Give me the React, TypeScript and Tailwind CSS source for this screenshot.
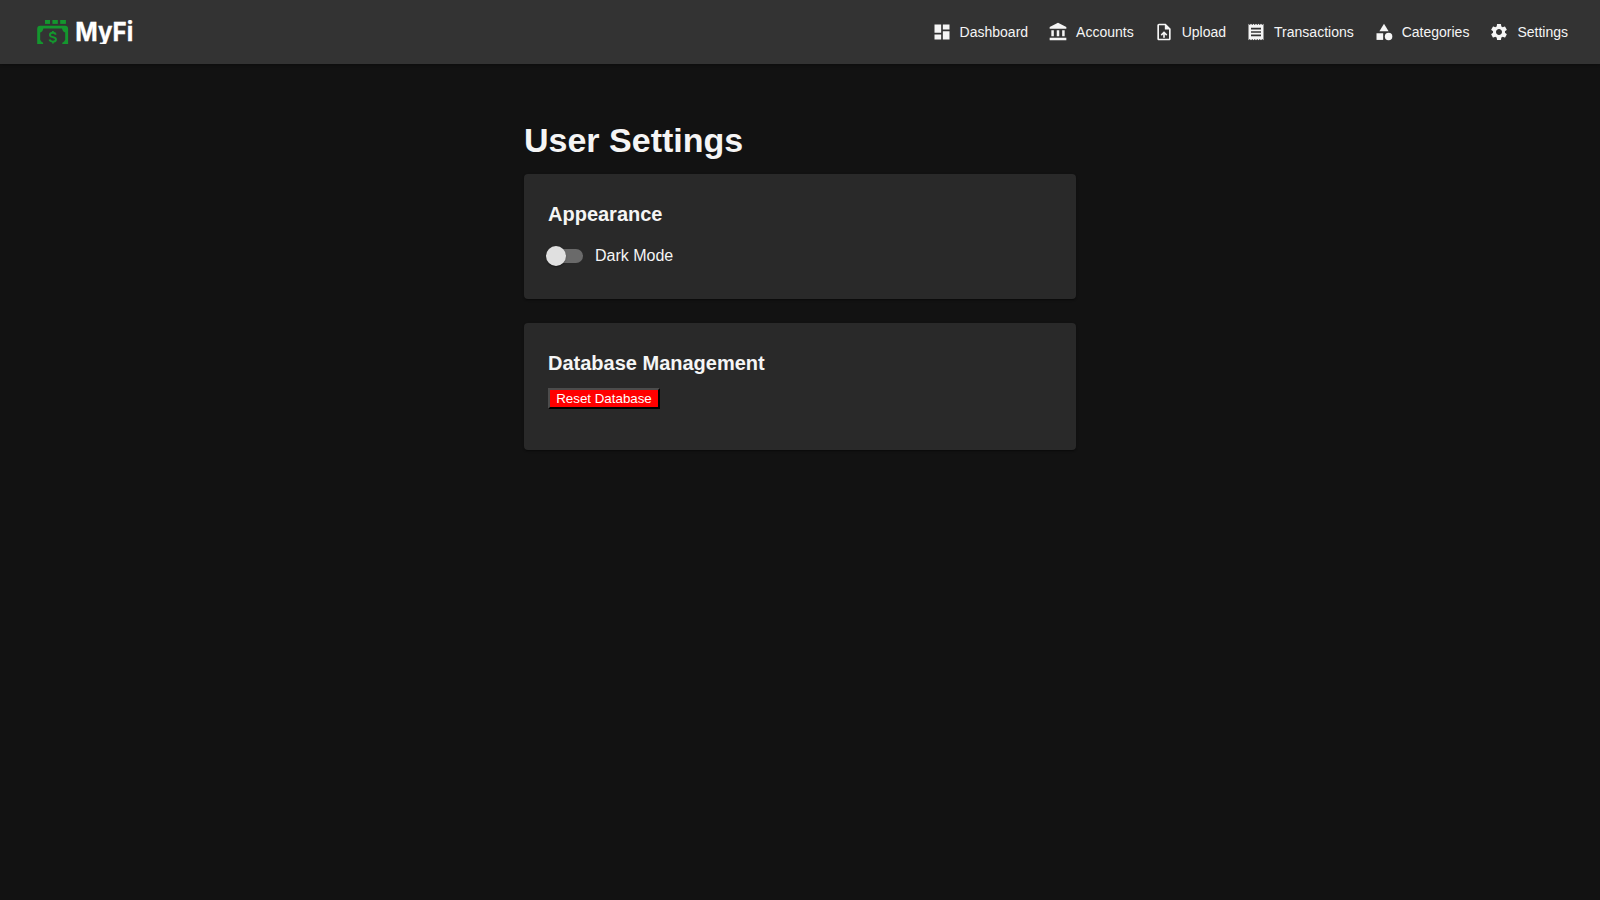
import { useState } from "react";
import type { IconType } from "react-icons";
import {
  MdAccountBalance,
  MdCategory,
  MdDashboard,
  MdOutlineUploadFile,
  MdReceipt,
  MdSettings,
} from "react-icons/md";

const links: { label: string; Icon: IconType }[] = [
  { label: "Dashboard", Icon: MdDashboard },
  { label: "Accounts", Icon: MdAccountBalance },
  { label: "Upload", Icon: MdOutlineUploadFile },
  { label: "Transactions", Icon: MdReceipt },
  { label: "Categories", Icon: MdCategory },
  { label: "Settings", Icon: MdSettings },
];

const cardClass =
  "rounded bg-[#292929] p-6 shadow-[0_2px_1px_-1px_rgba(0,0,0,0.2),0_1px_1px_rgba(0,0,0,0.14),0_1px_3px_rgba(0,0,0,0.12)]";
const headingClass = "mb-[7px] text-xl/8 font-bold";

function Logo() {
  return (
    <svg
      width="102"
      height="28"
      viewBox="0 0 102 28"
      role="img"
      aria-label="MyFi"
      className="mb-1 overflow-hidden"
    >
      <g fill="#14962e">
        <rect x="9" y="4" width="5" height="3.900" />
        <rect x="16.400" y="4" width="5.400" height="3.900" />
        <rect x="24.200" y="4" width="5.700" height="3.900" />
        <path d="M4.200 9.700H29.200Q32.100 9.700 32.100 12.700V28H26.300V26.700Q28.500 26 29.200 23.800V16.500Q26.700 16 26 12.600H7.400Q6.700 16 4.200 16.500V23.800Q4.900 26 7.100 26.700V28H1.200V12.700Q1.200 9.700 4.200 9.700Z" />
      </g>
      <path
        d="M19.800 18.600C19.400 17.300 18.300 16.800 16.900 16.800C15.100 16.800 13.900 17.600 13.900 19C13.900 20.400 15.200 20.800 16.900 21.200C18.700 21.600 20.100 22.100 20 23.600C19.900 24.900 18.500 25.600 16.900 25.600C15.100 25.600 13.900 24.900 13.500 23.500M16.900 14.900V16.800M16.900 25.500V27.500"
        fill="none"
        stroke="#14962e"
        strokeWidth="1.900"
      />
      <text
        x="39.300"
        y="25.400"
        fill="white"
        stroke="white"
        strokeWidth="0.300"
        fontFamily="Inter, sans-serif"
        fontSize="26.200"
        fontWeight="700"
        textLength="58"
        lengthAdjust="spacingAndGlyphs"
      >
        MyFi
      </text>
    </svg>
  );
}

export default function App() {
  const [dark, setDark] = useState(false);

  return (
    <div className="min-h-screen bg-[#121212] font-['Liberation_Sans',Arial,sans-serif] text-[#f5f5f5]">
      <header className="flex h-16 items-center justify-between bg-[#333333] pr-8 pl-9 shadow-[0_1px_3px_rgba(0,0,0,0.3)]">
        <Logo />
        <nav className="flex gap-5">
          {links.map(({ label, Icon }) => (
            <a key={label} href="#" className="flex items-center gap-2 text-sm">
              <Icon size={20} />
              {label}
            </a>
          ))}
        </nav>
      </header>

      <main className="mx-auto w-[552px] pt-[55px]">
        <h1 className="mb-[13px] text-[34px]/[42px] font-bold">User Settings</h1>

        <section className={cardClass}>
          <h2 className={headingClass}>Appearance</h2>
          <button
            type="button"
            role="switch"
            aria-checked={dark}
            onClick={() => setDark(!dark)}
            className="-ml-0.5 flex h-[38px] items-center gap-3 text-base"
          >
            <span className="relative ml-[3px] h-3.5 w-[34px] rounded-full bg-[#6a6a6a]">
              <span
                className={`absolute -top-[3px] size-5 rounded-full bg-[#e0e0e0] shadow-[0_2px_1px_-1px_rgba(0,0,0,0.2),0_1px_1px_rgba(0,0,0,0.14),0_1px_3px_rgba(0,0,0,0.12)] ${dark ? "left-[17px]" : "-left-[3px]"}`}
              />
            </span>
            Dark Mode
          </button>
        </section>

        <section className={`mt-6 h-[127px] ${cardClass}`}>
          <h2 className={headingClass}>Database Management</h2>
          <button
            type="button"
            className="mt-[9px] flex h-[21px] w-28 items-center justify-center border-2 border-t-[#4c4c4c] border-r-black border-b-black border-l-[#4c4c4c] bg-[#ff0000] text-[13.333px] whitespace-nowrap text-white"
          >
            Reset Database
          </button>
        </section>
      </main>
    </div>
  );
}
